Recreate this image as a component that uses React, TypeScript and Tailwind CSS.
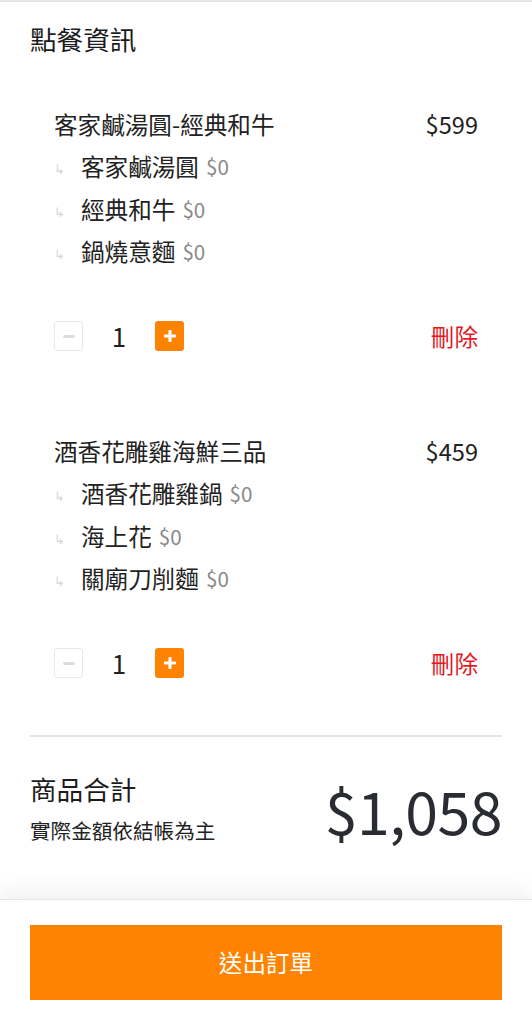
import React from 'react'

interface SubItem {
  name: string
  price: number
}

interface OrderItem {
  name: string
  price: number
  qty: number
  subs: SubItem[]
}

const items: OrderItem[] = [
  {
    name: '客家鹹湯圓-經典和牛',
    price: 599,
    qty: 1,
    subs: [
      { name: '客家鹹湯圓', price: 0 },
      { name: '經典和牛', price: 0 },
      { name: '鍋燒意麵', price: 0 },
    ],
  },
  {
    name: '酒香花雕雞海鮮三品',
    price: 459,
    qty: 1,
    subs: [
      { name: '酒香花雕雞鍋', price: 0 },
      { name: '海上花', price: 0 },
      { name: '關廟刀削麵', price: 0 },
    ],
  },
]

function QtyControl({ qty }: { qty: number }) {
  return (
    <div className="flex items-center">
      <button className="flex h-[30px] w-[29px] items-center justify-center rounded-[3px] border-[1.5px] border-[#e8e8e8] bg-white">
        <span className="block h-[3px] w-[12px] rounded-full bg-[#dcdcdc]" />
      </button>
      <span className="w-[72px] text-center text-[26px] leading-[30px] text-[#222]">{qty}</span>
      <button className="flex h-[30px] w-[29px] items-center justify-center rounded-[3px] bg-[#ff8200]">
        <svg width="12" height="12" viewBox="0 0 12 12">
          <path d="M6 1v10M1 6h10" stroke="#fff" strokeWidth="3" strokeLinecap="round" />
        </svg>
      </button>
    </div>
  )
}

function OrderBlock({ item }: { item: OrderItem }) {
  return (
    <div className="px-[24px]">
      <div className="flex h-[42.5px] items-center justify-between text-[23.6px] text-[#222]">
        <span>{item.name}</span>
        <span>${item.price}</span>
      </div>
      {item.subs.map((sub) => (
        <div key={sub.name} className="flex h-[42.5px] items-center">
          <span className="w-[27px] pt-[4px] text-[13px] text-[#d6d6d6]">↳</span>
          <span className="text-[23.6px] text-[#222]">{sub.name}</span>
          <span className="ml-[7px] text-[20.6px] text-[#8a8a8a]">${sub.price}</span>
        </div>
      ))}
      <div className="mt-[48px] flex items-center justify-between">
        <QtyControl qty={item.qty} />
        <button className="text-[23.6px] leading-[30px] text-[#e4181f]">刪除</button>
      </div>
    </div>
  )
}

export default function App() {
  const total = items.reduce((sum, i) => sum + i.price * i.qty, 0)

  return (
    <div className="flex h-[1024px] flex-col overflow-hidden border-t-2 border-[#e6e6e6] bg-white font-['Noto_Sans_CJK_TC','Noto_Sans_CJK_SC',sans-serif]">
      {/* 點餐內容 */}
      <div className="flex-1 px-[30px]">
        <h2 className="pt-[17px] text-[26.6px] leading-[40px] text-[#1c1c1c]">點餐資訊</h2>

        <div className="mt-[44px]">
          <OrderBlock item={items[0]} />
        </div>
        <div className="mt-[79px]">
          <OrderBlock item={items[1]} />
        </div>

        <div className="mt-[57px] border-t-2 border-[#e3e3e3]" />

        {/* 合計 */}
        <div className="mt-[32px] flex items-center justify-between">
          <div>
            <div className="text-[26.6px] leading-[40px] text-[#1c1c1c]">商品合計</div>
            <div className="mt-[6px] text-[20.6px] leading-[30px] text-[#222]">實際金額依結帳為主</div>
          </div>
          <div className="pt-[6px] text-[59px] leading-[64px] tracking-[-0.5px] text-[#2a2c33]">
            ${total.toLocaleString('en-US')}
          </div>
        </div>
      </div>

      {/* 送出按鈕 */}
      <div className="border-t border-[#e6e6e6] px-[30px] pt-[25px] pb-[24px] shadow-[0_-10px_18px_rgba(0,0,0,0.05)]">
        <button className="flex h-[75px] w-full items-center justify-center bg-[#ff8300] text-[23.6px] text-white">
          送出訂單
        </button>
      </div>
    </div>
  )
}
